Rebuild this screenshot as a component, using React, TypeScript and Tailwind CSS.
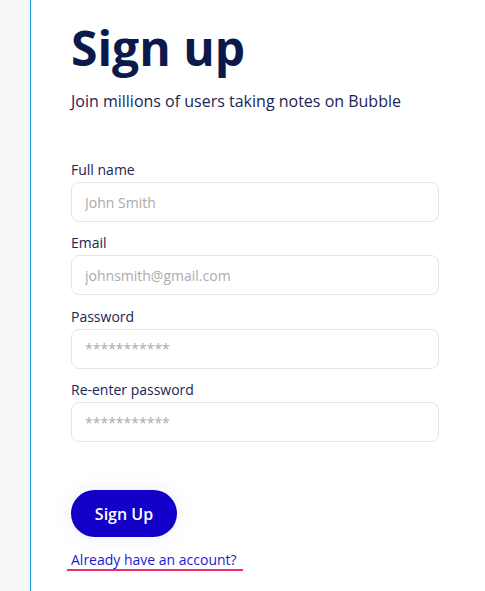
import React from "react";

const fields = [
  { label: "Full name", placeholder: "John Smith", type: "text" },
  { label: "Email", placeholder: "johnsmith@gmail.com", type: "email" },
  { label: "Password", placeholder: "***********", type: "text" },
  { label: "Re-enter password", placeholder: "***********", type: "text" },
];

export default function App() {
  return (
    <div
      className="flex min-h-screen bg-white"
      style={{ fontFamily: '"Open Sans", "Noto Sans", sans-serif' }}
    >
      <div className="w-[30px] shrink-0 bg-[#f8f8fa]" />
      <div className="flex-1 border-l border-[#1f9ad6] pl-[40px] pr-[46px] pt-[19px]">
        <h1 className="text-[48px] font-bold leading-[58px] text-[#0c1a4b]">Sign up</h1>
        <p className="mt-[12px] text-[16px] leading-[24px] text-[#1c2452]">
          Join millions of users taking notes on Bubble
        </p>
        <form className="mt-[47px] flex flex-col gap-[11.4px]" onSubmit={(e) => e.preventDefault()}>
          {fields.map((f) => (
            <div key={f.label} className="flex flex-col gap-[2px]">
              <label className="text-[14px] leading-[20px] text-[#1c2452]">{f.label}</label>
              <input
                type={f.type}
                placeholder={f.placeholder}
                className="h-[40px] w-full rounded-lg border border-[#e6e6ea] bg-white px-[13px] text-[14px] text-[#1c2452] outline-none placeholder:text-[#ababab]"
              />
            </div>
          ))}
        </form>
        <button className="mt-[48px] h-[47px] w-[106px] rounded-full bg-[#1300c9] text-[16px] font-semibold text-white shadow-[0_0_22px_rgba(19,0,201,0.07)]">
          Sign Up
        </button>
        <div className="mt-[10px]">
          <a
            href="#"
            className="ml-[-4px] inline-block border-b-2 border-[#ef2d6c] px-[4px] pr-[6px] text-[14px] leading-[18px] text-[#1a1ad2]"
          >
            Already have an account?
          </a>
        </div>
      </div>
    </div>
  );
}
